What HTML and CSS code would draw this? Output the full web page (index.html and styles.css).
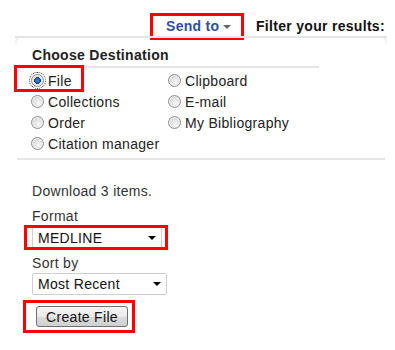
FILE: index.html
```html
<!DOCTYPE html>
<html lang="en">

<head>
    <meta charset="UTF-8">
    <meta name="viewport" content="width=device-width, initial-scale=1.0">
    <title>Send to</title>
    <link rel="stylesheet" href="styles.css">
</head>

<body>
    <div class="topbar">
        <span class="send-to mark">Send to<span class="caret"></span></span>
        <span class="filter-title">Filter your results:</span>
    </div>

    <div class="panel">
        <div class="panel-title">Choose Destination</div>
        <div class="divider short"></div>

        <div class="dest-grid">
            <label class="dest mark mark-file"><span class="radio checked"></span>File</label>
            <label class="dest"><span class="radio"></span>Clipboard</label>
            <label class="dest"><span class="radio"></span>Collections</label>
            <label class="dest"><span class="radio"></span>E-mail</label>
            <label class="dest"><span class="radio"></span>Order</label>
            <label class="dest"><span class="radio"></span>My Bibliography</label>
            <label class="dest"><span class="radio"></span>Citation manager</label>
        </div>

        <div class="divider long"></div>

        <div class="count">Download 3 items.</div>

        <div class="field-label format-label">Format</div>
        <div class="select format-select mark mark-format">MEDLINE<span class="arrow"></span></div>

        <div class="field-label sort-label">Sort by</div>
        <div class="select sort-select">Most Recent<span class="arrow"></span></div>

        <div class="button-row mark mark-create">
            <button class="create-button">Create File</button>
        </div>
    </div>
</body>

</html>
```

FILE: styles.css
```css
body {
    margin: 0;
    padding-bottom: 20px;
    min-height: 350px;
    box-sizing: border-box;
    font-family: "Liberation Sans", Arial, sans-serif;
    font-size: 14px;
    line-height: 16px;
    letter-spacing: 0.3px;
    color: #222;
    background-color: #fff;
}

/* red annotation boxes drawn over the elements */
.mark {
    position: relative;
}

.mark::after {
    content: "";
    position: absolute;
    border: 3px solid #f00;
    pointer-events: none;
}

.topbar {
    display: flex;
    align-items: center;
    height: 20px;
    padding: 16px 0 0 153px;
}

.send-to {
    display: flex;
    align-items: center;
    width: 88px;
    height: 20px;
    box-sizing: border-box;
    padding-left: 13px;
    font-weight: bold;
    color: #2f4f9f;
}

.send-to::after {
    top: -3px;
    left: -3px;
    right: -3px;
    bottom: -4px;
}

.caret {
    margin-left: 4px;
    margin-top: 2px;
    border-left: 4px solid transparent;
    border-right: 4px solid transparent;
    border-top: 4px solid #666;
}

.filter-title {
    margin-left: 15px;
    font-weight: bold;
    color: #111;
}

.panel {
    position: relative;
    width: 372px;
    margin-left: 15px;
    padding: 9px 0 0 17px;
    box-sizing: border-box;
    border-top: 2px solid #e4e4e4;
}

.panel::before {
    content: "";
    position: absolute;
    top: -2px;
    left: 0;
    right: 0;
    height: 8px;
    border: 2px solid #e4e4e4;
    border-bottom: none;
    border-radius: 6px 6px 0 0;
    -webkit-mask-image: linear-gradient(#000, transparent);
}

.panel-title {
    font-weight: bold;
    margin-bottom: 3px;
}

.divider {
    height: 2px;
    background-color: #e6e6e6;
}

.divider.short {
    width: 304px;
    margin-left: -17px;
    margin-bottom: 2px;
}

.divider.long {
    width: 368px;
    margin-left: -15px;
    margin-top: 4px;
}

.dest-grid {
    display: grid;
    grid-template-columns: 137px auto;
    grid-auto-rows: 21px;
    margin-left: -1px;
}

.dest {
    display: flex;
    align-items: center;
}

.mark-file::after {
    top: -5px;
    left: -17px;
    width: 70px;
    height: 27px;
    box-sizing: border-box;
}

.radio {
    width: 13px;
    height: 13px;
    box-sizing: border-box;
    margin-right: 4px;
    border: 1px solid #8c8e90;
    border-radius: 50%;
    background: radial-gradient(circle at 60% 65%, #f7f7f7 0%, #e2e2e2 45%, #c9c9c9 100%);
    box-shadow: inset 0 0 0 1px #f2f2f2;
}

.radio.checked {
    background: radial-gradient(circle at 50% 50%, #3b8ee0 0%, #1a5fb0 30%, #0d3d7a 42%, #e4e4e4 46%, #cfcfcf 100%);
    outline: 1px dotted #333;
    outline-offset: 1px;
}

.count {
    margin-top: 23px;
    color: #333;
}

.field-label {
    color: #333;
}

.format-label {
    margin-top: 9px;
}

.sort-label {
    margin-top: 6px;
}

.select {
    display: flex;
    align-items: center;
    justify-content: space-between;
    height: 22px;
    box-sizing: border-box;
    padding: 0 5px 0 5px;
    border: 1px solid #cfcfcf;
    border-radius: 2px;
    background-color: #fff;
    color: #111;
}

.format-select {
    width: 130px;
    margin-top: 3px;
}

.mark-format::after {
    top: -3px;
    left: -9px;
    right: -7px;
    bottom: -2px;
}

.sort-select {
    width: 135px;
    margin-top: 2px;
}

.arrow {
    border-left: 4px solid transparent;
    border-right: 4px solid transparent;
    border-top: 4px solid #000;
}

.button-row {
    width: 92px;
    margin: 11px 0 0 4px;
}

.create-button {
    display: block;
    width: 92px;
    height: 21px;
    padding: 0;
    font-family: inherit;
    font-size: 14px;
    letter-spacing: 0.3px;
    color: #111;
    border: 1px solid #707070;
    border-radius: 3px;
    background: linear-gradient(#f4f4f4 0%, #ebebeb 50%, #dcdcdc 51%, #d0d0d0 100%);
}

.mark-create::after {
    top: -6px;
    left: -13px;
    right: -7px;
    bottom: -6px;
}
```
